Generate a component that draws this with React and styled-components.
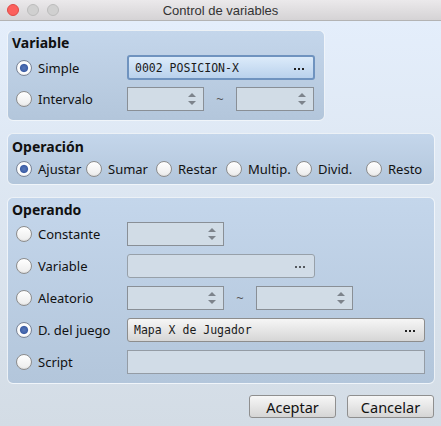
import styled, { createGlobalStyle } from "styled-components";

const GlobalStyle = createGlobalStyle`
  html, body {
    margin: 0;
    padding: 0;
  }
  body {
    width: 441px;
    height: 426px;
    overflow: hidden;
    font-family: "Noto Sans", "DejaVu Sans", sans-serif;
    color: #111;
  }
`;

const Radio = ({ checked, children }) => (
  <RadioWrap>
    <RadioCircle $checked={checked} />
    <RadioLabel>{children}</RadioLabel>
  </RadioWrap>
);

const Spin = ({ width }) => (
  <SpinBox style={{ width }}>
    <Arrows>
      <ArrowUp />
      <ArrowDown />
    </Arrows>
  </SpinBox>
);

const Ellipsis = ({ dim }) => (
  <Dots>
    <Dot $dim={dim} />
    <Dot $dim={dim} />
    <Dot $dim={dim} />
  </Dots>
);

const App = () => {
  return (
    <>
      <GlobalStyle />
      <Window>
        <TitleBar>
          <Lights>
            <Light $color="#fc605c" $border="#de4a45" />
            <Light $color="#d0d0d0" $border="#bcbcbc" />
            <Light $color="#d0d0d0" $border="#bcbcbc" />
          </Lights>
          <Title>Control de variables</Title>
          <span />
        </TitleBar>
        <Body>
          <Panel $width="318px">
            <Heading>Variable</Heading>
            <Rows>
              <Row>
                <Radio checked>Simple</Radio>
                <PickButton $variant="focus">
                  <Mono>0002 POSICION-X</Mono>
                  <Ellipsis />
                </PickButton>
              </Row>
              <Row>
                <Radio>Intervalo</Radio>
                <Range>
                  <Spin width="77px" />
                  <Tilde>~</Tilde>
                  <Spin width="78px" />
                </Range>
              </Row>
            </Rows>
          </Panel>

          <Panel $compact>
            <Heading>Operación</Heading>
            <OpRow>
              <Radio checked>Ajustar</Radio>
              <Radio>Sumar</Radio>
              <Radio>Restar</Radio>
              <Radio>Multip.</Radio>
              <Radio>Divid.</Radio>
              <Radio>Resto</Radio>
            </OpRow>
          </Panel>

          <Panel>
            <Heading>Operando</Heading>
            <Rows>
              <Row>
                <Radio>Constante</Radio>
                <Spin width="97px" />
              </Row>
              <Row>
                <Radio>Variable</Radio>
                <PickButton $variant="disabled" style={{ width: "188px" }}>
                  <span />
                  <Ellipsis dim />
                </PickButton>
              </Row>
              <Row>
                <Radio>Aleatorio</Radio>
                <Range>
                  <Spin width="97px" />
                  <Tilde>~</Tilde>
                  <Spin width="97px" />
                </Range>
              </Row>
              <Row>
                <Radio checked>D. del juego</Radio>
                <PickButton>
                  <Mono>Mapa X de Jugador</Mono>
                  <Ellipsis />
                </PickButton>
              </Row>
              <Row>
                <Radio>Script</Radio>
                <TextField />
              </Row>
            </Rows>
          </Panel>

          <Footer>
            <DialogButton>Aceptar</DialogButton>
            <DialogButton>Cancelar</DialogButton>
          </Footer>
        </Body>
      </Window>
    </>
  );
};

const Window = styled.div`
  width: 441px;
  height: 426px;
  display: flex;
  flex-direction: column;
`;

const TitleBar = styled.div`
  height: 20px;
  border-bottom: 1px solid #b3b3b3;
  background: linear-gradient(#ebe9eb, #d5d3d5);
  display: grid;
  grid-template-columns: 1fr auto 1fr;
  align-items: center;
`;

const Lights = styled.div`
  display: flex;
  gap: 8px;
  padding-left: 7px;
`;

const Light = styled.div`
  width: 10px;
  height: 10px;
  border-radius: 50%;
  background: ${(p) => p.$color};
  border: 1px solid ${(p) => p.$border};
`;

const Title = styled.div`
  font-family: "Liberation Sans", Arial, sans-serif;
  font-size: 13px;
  color: #333;
`;

const Body = styled.div`
  flex: 1;
  background: linear-gradient(#e4eefb, #d3dce5);
  padding: 9px 6px 7px 7px;
  display: flex;
  flex-direction: column;
  gap: 11px;
`;

const Panel = styled.div`
  width: ${(p) => p.$width || "auto"};
  align-self: ${(p) => (p.$width ? "flex-start" : "stretch")};
  box-sizing: border-box;
  border: 1px solid rgba(255, 255, 255, 0.75);
  border-radius: 6px;
  background: linear-gradient(#c4d6eb, #b3c6db);
  padding: ${(p) => (p.$compact ? "4px 9px 5px 4px" : "3px 9px 9px 4px")};
  & + & {
    margin-top: ${(p) => (p.$compact ? "0" : "1px")};
  }
`;

const Heading = styled.div`
  font-weight: 700;
  font-size: 14px;
  line-height: 18px;
  height: 18px;
  margin-bottom: 3px;
  color: #111;
`;

const Rows = styled.div`
  display: flex;
  flex-direction: column;
  gap: 8px;
  padding-left: 4px;
`;

const Row = styled.div`
  display: grid;
  grid-template-columns: 111px auto;
  align-items: center;
  height: 24px;
`;

const OpRow = styled.div`
  display: grid;
  grid-template-columns: repeat(6, 70px);
  height: 20px;
  align-items: center;
  padding-left: 4px;
`;

const RadioWrap = styled.div`
  display: flex;
  align-items: center;
  gap: 6px;
  white-space: nowrap;
`;

const RadioCircle = styled.div`
  width: 16px;
  height: 16px;
  box-sizing: border-box;
  flex: none;
  border-radius: 50%;
  border: 1px solid ${(p) => (p.$checked ? "#7b8598" : "#8d8d8d")};
  background: ${(p) =>
    p.$checked
      ? "radial-gradient(circle, #5578bb 0, #3f5fa6 3.6px, #ffffff 4.6px, #f2f2f2 100%)"
      : "linear-gradient(#ffffff, #ececec)"};
  box-shadow: inset 0 -1px 1px rgba(0, 0, 0, 0.06);
`;

const RadioLabel = styled.span`
  font-size: 13px;
  line-height: 16px;
  color: #111;
`;

const PickButton = styled.div`
  height: 24px;
  box-sizing: border-box;
  display: flex;
  align-items: center;
  justify-content: space-between;
  padding: 0 9px 0 6px;
  border-radius: 3px;
  ${(p) =>
    p.$variant === "focus"
      ? `
    height: 25px;
    border: 2px solid #6f93bf;
    background: linear-gradient(#dcebfa, #b9d1ec);
  `
      : p.$variant === "disabled"
      ? `
    border: 1px solid #97a0a9;
    background: #d1dce7;
  `
      : `
    border: 1px solid #8d8d8d;
    background: linear-gradient(#f6f6f6, #d6d6d6);
  `}
`;

const Mono = styled.span`
  font-family: "DejaVu Sans Mono", "Liberation Mono", monospace;
  font-size: 11.5px;
  color: #1a1a1a;
`;

const Dots = styled.span`
  display: flex;
  gap: 2px;
  padding-top: 2px;
`;

const Dot = styled.span`
  width: 2px;
  height: 2px;
  background: ${(p) => (p.$dim ? "#55595e" : "#222")};
`;

const Range = styled.div`
  display: flex;
  align-items: center;
`;

const Tilde = styled.span`
  width: 32px;
  text-align: center;
  font-size: 13px;
  color: #555;
`;

const SpinBox = styled.div`
  height: 24px;
  box-sizing: border-box;
  border: 1px solid #898f96;
  background: #d1dce6;
  display: flex;
  justify-content: flex-end;
  align-items: center;
  padding-right: 7px;
`;

const Arrows = styled.div`
  display: flex;
  flex-direction: column;
  gap: 4px;
`;

const ArrowUp = styled.div`
  width: 0;
  height: 0;
  border-left: 4px solid transparent;
  border-right: 4px solid transparent;
  border-bottom: 4px solid #7d838b;
`;

const ArrowDown = styled.div`
  width: 0;
  height: 0;
  border-left: 4px solid transparent;
  border-right: 4px solid transparent;
  border-top: 4px solid #7d838b;
`;

const TextField = styled.div`
  height: 24px;
  box-sizing: border-box;
  border: 1px solid #949ca5;
  background: #d1dce7;
`;

const Footer = styled.div`
  display: flex;
  justify-content: flex-end;
  gap: 11px;
  padding-right: 1px;
`;

const DialogButton = styled.button`
  width: 87px;
  height: 23px;
  padding: 0;
  font-family: "Noto Sans", "DejaVu Sans", sans-serif;
  font-size: 14.5px;
  color: #111;
  border: 1px solid #8f8f8f;
  border-radius: 3px;
  background: linear-gradient(#f7f7f7, #d5d5d5);
  display: flex;
  align-items: center;
  justify-content: center;
`;

export default App;
